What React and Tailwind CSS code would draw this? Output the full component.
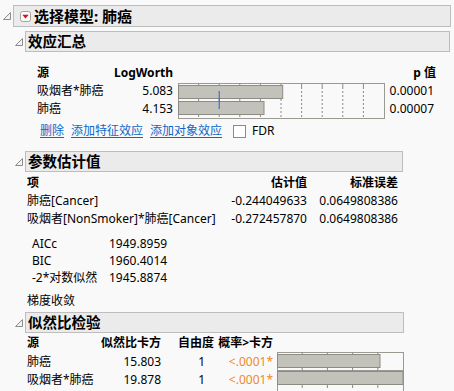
import React from "react";

const Tri = () => (
  <svg width="8" height="8" viewBox="0 0 8 8" className="shrink-0">
    <path d="M7.5 0.5 L7.5 7.5 L0.5 7.5 Z" fill="#f2f2f2" stroke="#8c8c8c" strokeWidth="1" strokeLinejoin="round" />
  </svg>
);

const RedBtn = () => (
  <svg width="11" height="11" viewBox="0 0 11 11" className="shrink-0">
    <rect x="0.5" y="0.5" width="10" height="10" rx="2" fill="#fbfbfb" stroke="#a3a3a3" />
    <path d="M2.3 3.8 L8.7 3.8 L5.5 7.6 Z" fill="#d41414" />
  </svg>
);

const Header = ({ width, children, big }) => (
  <div
    className={`ml-[2px] flex items-center border border-[#bdbdbd] bg-[#ebebeb] ${big ? "h-[22px] pl-[6px]" : "h-[21px] pl-[2px]"}`}
    style={{ width }}
  >
    {children}
  </div>
);

const Chart1 = () => {
  const unit = 20.6;
  const ticks = Array.from({ length: 9 }, (_, i) => (i + 1) * unit);
  return (
    <svg width="207" height="36" viewBox="0 0 207 36">
      <rect x="0.5" y="0.5" width="206" height="35" fill="none" stroke="#9a9a92" />
      {ticks.map((x) => (
        <g key={x}>
          <line x1={x} y1="0.5" x2={x} y2="4" stroke="#8a8a84" />
          <line x1={x} y1="4" x2={x} y2="35" stroke="#8a8a84" strokeDasharray="2 2" />
        </g>
      ))}
      <rect x="0.5" y="2.5" width="104.2" height="13" fill="#c3c2ba" stroke="#8c8b84" />
      <rect x="0.5" y="18.5" width="85.5" height="13" fill="#c3c2ba" stroke="#8c8b84" />
      <line x1="41.2" y1="8" x2="41.2" y2="26" stroke="#2f5fd8" strokeWidth="1" />
    </svg>
  );
};

const Chart3 = () => {
  const unit = 25.2;
  const ticks = Array.from({ length: 4 }, (_, i) => (i + 1) * unit);
  return (
    <svg width="127" height="39" viewBox="0 0 127 39">
      <line x1="0" y1="0.5" x2="127" y2="0.5" stroke="#9a9a92" />
      <line x1="0" y1="18.5" x2="127" y2="18.5" stroke="#9a9a92" />
      <line x1="0.5" y1="0" x2="0.5" y2="39" stroke="#9a9a92" />
      <line x1="126.5" y1="0" x2="126.5" y2="39" stroke="#9a9a92" />
      {ticks.map((x) => (
        <g key={x}>
          <line x1={x} y1="0.5" x2={x} y2="3" stroke="#8a8a84" />
          <line x1={x} y1="15.5" x2={x} y2="18.5" stroke="#8a8a84" />
          <line x1={x} y1="33" x2={x} y2="36" stroke="#8a8a84" />
        </g>
      ))}
      <rect x="0.5" y="2.5" width="102.5" height="13" fill="#c3c2ba" stroke="#8c8b84" />
      <rect x="0.5" y="19.5" width="125.5" height="13" fill="#c3c2ba" stroke="#8c8b84" />
    </svg>
  );
};

export default function App() {
  return (
    <div className="w-[454px] h-[391px] overflow-hidden bg-[#f9f9f9] pt-[5px] text-[12px] leading-[18px] text-black font-['Noto_Sans','Noto_Sans_CJK_SC',sans-serif]">
      {/* Outline 1 */}
      <div className="flex items-center pl-[3px]">
        <Tri />
        <Header width={438} big>
          <RedBtn />
          <span className="ml-[3px] text-[15px] font-bold leading-[20px]">选择模型: 肺癌</span>
        </Header>
      </div>

      {/* Outline 2 */}
      <div className="mt-[4px] flex items-center pl-[15px]">
        <Tri />
        <Header width={425}>
          <span className="text-[14.5px] font-bold leading-[19px]">效应汇总</span>
        </Header>
      </div>

      <div className="mt-[12px] pl-[37px] grid grid-cols-[76px_60px_211px_52px] grid-rows-[18px_18px_18px]">
        <div className="font-bold">源</div>
        <div className="font-bold text-right">LogWorth</div>
        <div></div>
        <div className="font-bold text-right">p 值</div>

        <div className="col-start-1 row-start-2">吸烟者*肺癌</div>
        <div className="col-start-2 row-start-2 text-right">5.083</div>
        <div className="col-start-3 row-start-2 row-span-2 pl-[5px] pt-[1px]">
          <Chart1 />
        </div>
        <div className="col-start-4 row-start-2 text-right pr-[2px]">0.00001</div>

        <div className="col-start-1 row-start-3">肺癌</div>
        <div className="col-start-2 row-start-3 text-right">4.153</div>
        <div className="col-start-4 row-start-3 text-right pr-[2px]">0.00007</div>
      </div>

      <div className="mt-[4px] flex h-[18px] items-center pl-[40px] text-[#0f66c8]">
        <span className="underline underline-offset-2">删除</span>
        <span className="ml-[7px] underline underline-offset-2">添加特征效应</span>
        <span className="ml-[7px] underline underline-offset-2">添加对象效应</span>
        <span className="ml-[11px] h-[13px] w-[13px] border border-[#8a8a8a] bg-white"></span>
        <span className="ml-[6px] text-black">FDR</span>
      </div>

      {/* Outline 3 */}
      <div className="mt-[11px] flex items-center pl-[15px]">
        <Tri />
        <Header width={378}>
          <span className="text-[14.5px] font-bold leading-[19px]">参数估计值</span>
        </Header>
      </div>

      <div className="mt-[2px] pl-[27px] grid grid-cols-[203px_77px_91px] auto-rows-[18px]">
        <div className="font-bold">项</div>
        <div className="font-bold text-right">估计值</div>
        <div className="font-bold text-right">标准误差</div>
        <div>肺癌[Cancer]</div>
        <div className="text-right">-0.244049633</div>
        <div className="text-right">0.0649808386</div>
        <div>吸烟者[NonSmoker]*肺癌[Cancer]</div>
        <div className="text-right">-0.272457870</div>
        <div className="text-right">0.0649808386</div>
      </div>

      <div className="mt-[7px] pl-[32px] grid grid-cols-[77px_100px] auto-rows-[17px] leading-[17px]">
        <div>AICc</div>
        <div>1949.8959</div>
        <div>BIC</div>
        <div>1960.4014</div>
        <div>-2*对数似然</div>
        <div>1945.8874</div>
      </div>

      <div className="mt-[6px] pl-[27px] h-[18px]">梯度收敛</div>

      {/* Outline 4 */}
      <div className="mt-[2px] flex items-center pl-[15px]">
        <Tri />
        <Header width={379}>
          <span className="text-[14.5px] font-bold leading-[19px]">似然比检验</span>
        </Header>
      </div>

      <div className="mt-[1px] pl-[27px] grid grid-cols-[70px_64px_53px_59px_131px] grid-rows-[19px_18px_18px]">
        <div className="font-bold">源</div>
        <div className="font-bold text-right">似然比卡方</div>
        <div className="font-bold text-right">自由度</div>
        <div className="font-bold text-right">概率&gt;卡方</div>
        <div></div>

        <div className="col-start-1 row-start-2">肺癌</div>
        <div className="col-start-2 row-start-2 text-right">15.803</div>
        <div className="col-start-3 row-start-2 text-right pr-[9px]">1</div>
        <div className="col-start-4 row-start-2 text-right text-[#ee8a2c]">&lt;.0001*</div>
        <div className="col-start-5 row-start-2 row-span-2 pl-[4px] -mt-[1px]">
          <Chart3 />
        </div>

        <div className="col-start-1 row-start-3">吸烟者*肺癌</div>
        <div className="col-start-2 row-start-3 text-right">19.878</div>
        <div className="col-start-3 row-start-3 text-right pr-[9px]">1</div>
        <div className="col-start-4 row-start-3 text-right text-[#ee8a2c]">&lt;.0001*</div>
      </div>
    </div>
  );
}
